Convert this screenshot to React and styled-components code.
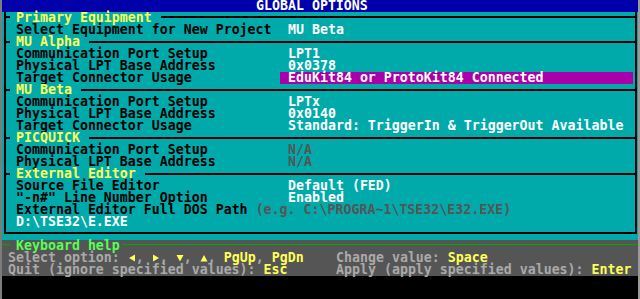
import React from 'react';
import styled, { createGlobalStyle } from 'styled-components';

const GlobalStyle = createGlobalStyle`
  html, body {
    margin: 0;
    padding: 0;
    background: #000;
  }
`;

const Screen = styled.div`
  position: relative;
  width: 640px;
  height: 299px;
  overflow: hidden;
  background: #000;
  font-family: "DejaVu Sans Mono", "Liberation Mono", monospace;
  font-weight: bold;
  font-size: 13.288px;
  line-height: 12px;
  white-space: pre;

  &::after {
    content: '';
    position: absolute;
    inset: 0;
    border-left: 2px solid #7c7c7c;
    border-right: 2px solid #9a9a9a;
    pointer-events: none;
  }
`;

const TitleBar = styled.div`
  height: 12px;
  padding-left: 256px;
  background: #0000aa;
  color: #fff;
`;

const Dialog = styled.div`
  padding: 4px 3px 6px 4px;
  background: #00aaaa;
`;

const Frame = styled.div`
  border: 2px solid #000;
  border-top: none;
  padding-bottom: 4px;
`;

const SectionRow = styled.div`
  display: flex;
  align-items: flex-start;
  height: 12px;
  margin-top: ${({ $first }) => ($first ? '-4px' : '0')};
`;

const Tick = styled.span`
  flex: 0 0 4px;
  height: 2px;
  margin-top: ${({ $first }) => ($first ? '4px' : '5px')};
  margin-right: 6px;
  background: #000;
`;

const SectionTitle = styled.span`
  color: #ffff55;
`;

const Rule = styled.span`
  flex: 1;
  height: 2px;
  margin-top: ${({ $first }) => ($first ? '4px' : '5px')};
  margin-left: 9px;
  background: #000;
`;

const FieldRow = styled.div`
  display: flex;
  height: 12px;
  padding-left: 10px;
  color: #000;
`;

const Label = styled.span`
  flex: 0 0 264px;
`;

const Value = styled.span`
  flex: 0 0 353px;
  box-sizing: border-box;
  padding-left: 8px;
  color: ${({ $muted }) => ($muted ? '#555555' : '#ffffff')};
  background: ${({ $selected }) => ($selected ? '#aa00aa' : 'transparent')};
`;

const Hint = styled.span`
  margin-left: 8px;
  color: #555555;
`;

const PathValue = styled.span`
  color: #fff;
`;

const HelpPanel = styled.div`
  height: 36px;
  background: #555555;
  color: #aaaaaa;
`;

const HelpHeader = styled.div`
  display: flex;
  align-items: flex-start;
  height: 12px;
`;

const HelpTick = styled.span`
  flex: 0 0 10px;
  height: 1px;
  margin-top: 4px;
  margin-right: 6px;
  background: #00aa00;
`;

const HelpTitle = styled.span`
  color: #55ff55;
`;

const HelpRule = styled.span`
  flex: 1;
  height: 1px;
  margin-top: 4px;
  margin-left: 2px;
  background: #00aa00;
`;

const HelpRow = styled.div`
  display: flex;
  height: 12px;
  padding-left: 8px;
`;

const HelpCell = styled.span`
  flex: 0 0 ${({ $width }) => $width || 'auto'};
`;

const Key = styled.span`
  color: #ffff55;
`;

const ArrowBox = styled.svg`
  display: inline-block;
  width: 8px;
  height: 12px;
  vertical-align: top;
  fill: #ffff55;
`;

const arrowPoints = {
  left: '1,6 7,2.5 7,9.5',
  right: '7,6 1,2.5 1,9.5',
  down: '0.5,3 7.5,3 4,9.5',
  up: '0.5,9.5 7.5,9.5 4,3',
};

const Arrow = ({ dir }) => (
  <ArrowBox viewBox="0 0 8 12">
    <polygon points={arrowPoints[dir]} />
  </ArrowBox>
);

const sections = [
  {
    title: 'Primary Equipment',
    fields: [{ label: 'Select Equipment for New Project', value: 'MU Beta' }],
  },
  {
    title: 'MU Alpha',
    fields: [
      { label: 'Communication Port Setup', value: 'LPT1' },
      { label: 'Physical LPT Base Address', value: '0x0378' },
      { label: 'Target Connector Usage', value: 'EduKit84 or ProtoKit84 Connected', selected: true },
    ],
  },
  {
    title: 'MU Beta',
    fields: [
      { label: 'Communication Port Setup', value: 'LPTx' },
      { label: 'Physical LPT Base Address', value: '0x0140' },
      { label: 'Target Connector Usage', value: 'Standard: TriggerIn & TriggerOut Available' },
    ],
  },
  {
    title: 'PICQUICK',
    fields: [
      { label: 'Communication Port Setup', value: 'N/A', muted: true },
      { label: 'Physical LPT Base Address', value: 'N/A', muted: true },
    ],
  },
  {
    title: 'External Editor',
    fields: [
      { label: 'Source File Editor', value: 'Default (FED)' },
      { label: '"-n#" Line Number Option', value: 'Enabled' },
    ],
  },
];

const App = () => (
  <Screen>
    <GlobalStyle />
    <TitleBar>GLOBAL OPTIONS</TitleBar>
    <Dialog>
      <Frame>
        {sections.map((section, i) => (
          <React.Fragment key={section.title}>
            <SectionRow $first={i === 0}>
              <Tick $first={i === 0} />
              <SectionTitle>{section.title}</SectionTitle>
              <Rule $first={i === 0} />
            </SectionRow>
            {section.fields.map((f) => (
              <FieldRow key={f.label}>
                <Label>{f.label}</Label>
                <Value $muted={f.muted} $selected={f.selected}>{f.value}</Value>
              </FieldRow>
            ))}
          </React.Fragment>
        ))}
        <FieldRow>
          External Editor Full DOS Path
          <Hint>(e.g. C:\PROGRA~1\TSE32\E32.EXE)</Hint>
        </FieldRow>
        <FieldRow>
          <PathValue>D:\TSE32\E.EXE</PathValue>
        </FieldRow>
      </Frame>
    </Dialog>
    <HelpPanel>
      <HelpHeader>
        <HelpTick />
        <HelpTitle>Keyboard help</HelpTitle>
        <HelpRule />
      </HelpHeader>
      <HelpRow>
        <HelpCell $width="328px">
          Select option: <Arrow dir="left" />, <Arrow dir="right" />, <Arrow dir="down" />, <Arrow dir="up" />, <Key>PgUp</Key>, <Key>PgDn</Key>
        </HelpCell>
        <HelpCell>
          Change value: <Key>Space</Key>
        </HelpCell>
      </HelpRow>
      <HelpRow>
        <HelpCell $width="328px">
          Quit (ignore specified values): <Key>Esc</Key>
        </HelpCell>
        <HelpCell>
          Apply (apply specified values): <Key>Enter</Key>
        </HelpCell>
      </HelpRow>
    </HelpPanel>
  </Screen>
);

export default App;
